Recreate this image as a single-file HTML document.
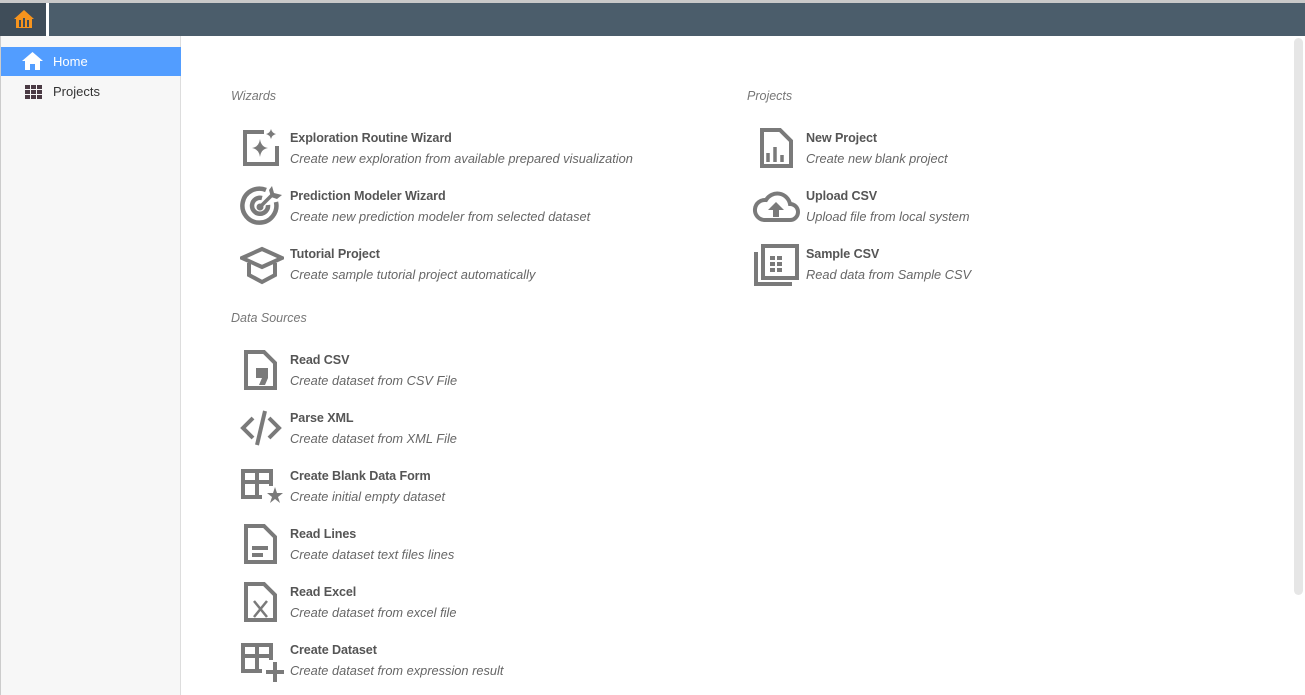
<!DOCTYPE html>
<html><head><meta charset="utf-8"><style>
*{margin:0;padding:0;box-sizing:border-box}
body{width:1305px;height:695px;overflow:hidden;background:#fff;font-family:"Liberation Sans",sans-serif;position:relative}
.top{position:absolute;left:0;top:0;width:1305px;height:36px;background:#4b5d6b;border-top:3px solid #c9c9c9}
.hb{position:absolute;left:0;top:0;width:49px;height:33px;background:#3f4d59;border-right:3px solid #fff}
.side{position:absolute;left:0;top:36px;width:181px;height:659px;background:#f7f7f7;border-right:1px solid #ddd;border-left:1px solid #ccc}
.nav{position:absolute;left:0;width:180px;height:29px;font-size:13px;line-height:29px;padding-left:52px;color:#333}
.nav.act{background:#529dff;color:#fff}
.sec{position:absolute;font-size:12.5px;font-style:italic;color:#777}
.it{position:absolute;height:50px}
.it svg{position:absolute;left:0;top:0}
.t{position:absolute;left:50px;top:3px;font-size:12.6px;font-weight:bold;color:#555;white-space:nowrap;letter-spacing:-0.1px}
.s{position:absolute;left:50px;top:23px;font-size:12.8px;font-style:italic;color:#666;white-space:nowrap}
.sb{position:absolute;left:1294px;top:38px;width:9px;height:557px;background:#e6e6e6;border-radius:5px}
</style></head><body>
<div class="top"><div class="hb">
<svg width="46" height="33" viewBox="0 0 46 33"><path d="M24 7 L14 16 H16 V25 H32 V16 H34 Z" fill="#f7941d"/><rect x="19" y="17" width="2" height="7" fill="#3f4d59"/><rect x="23" y="15" width="2" height="9" fill="#3f4d59"/><rect x="27" y="17" width="2" height="7" fill="#3f4d59"/></svg></div></div>
<div class="side">
<div class="nav act" style="top:11px"><svg style="position:absolute;left:21px;top:5px" width="21" height="18" viewBox="0 0 21 18"><path d="M10.5 0 L0 9 H3 V18 H8 V12 H13 V18 H18 V9 H21 Z" fill="#fff"/></svg>Home</div>
<div class="nav" style="top:41px"><svg style="position:absolute;left:24px;top:8px" width="17" height="14"><g fill="#4a3a44"><rect x="0" y="0" width="5" height="4"/><rect x="6" y="0" width="5" height="4"/><rect x="12" y="0" width="5" height="4"/><rect x="0" y="5" width="5" height="4"/><rect x="6" y="5" width="5" height="4"/><rect x="12" y="5" width="5" height="4"/><rect x="0" y="10" width="5" height="4"/><rect x="6" y="10" width="5" height="4"/><rect x="12" y="10" width="5" height="4"/></g></svg>Projects</div>
</div>
<div class="sb"></div>

<div class="sec" style="left:231px;top:89px">Wizards</div>
<div class="sec" style="left:747px;top:89px">Projects</div>
<div class="sec" style="left:231px;top:311px">Data Sources</div>

<div class="it" style="left:240px;top:128px"><svg width="44" height="44" viewBox="0 0 44 44" fill="none" stroke="#7a7a7a" stroke-width="4"><path d="M24 4 H5 V36 H37 V18"/><path d="M20 11 Q21 19 28 20 Q21 21 20 29 Q19 21 12 20 Q19 19 20 11Z" fill="#7a7a7a" stroke="none"/><path d="M31 1 Q32 5 36 6 Q32 7 31 11 Q30 7 26 6 Q30 5 31 1Z" fill="#7a7a7a" stroke="none"/></svg><div class="t">Exploration Routine Wizard</div><div class="s">Create new exploration from available prepared visualization</div></div>

<div class="it" style="left:240px;top:186px"><svg width="44" height="44" viewBox="0 0 44 44" fill="none" stroke="#7a7a7a" stroke-width="4.5"><path d="M36 16 A17 17 0 1 1 26 4"/><path d="M28 19 A8 8 0 1 1 22 12"/><circle cx="20" cy="21" r="3.5" fill="#7a7a7a" stroke="none"/><path d="M20 21 L32 9" stroke-width="3.5"/><path d="M29 4 L32 0 L34 7 L42 9 L37 13 L31 11Z" fill="#7a7a7a" stroke="none"/></svg><div class="t">Prediction Modeler Wizard</div><div class="s">Create new prediction modeler from selected dataset</div></div>

<div class="it" style="left:240px;top:244px"><svg width="44" height="44" viewBox="0 0 44 44" fill="none" stroke="#7a7a7a" stroke-width="4"><path d="M2 14 L22 5 L42 14 L22 23Z"/><path d="M9 19 V31 L22 38 L35 31 V19"/></svg><div class="t">Tutorial Project</div><div class="s">Create sample tutorial project automatically</div></div>

<div class="it" style="left:240px;top:350px"><svg width="44" height="44" viewBox="0 0 44 44" fill="none" stroke="#7a7a7a" stroke-width="4"><path d="M6 2 H24 L35 13 V38 H6Z"/><path d="M16 18 H28 V28 L25 35 H19 L22 28 H16Z" fill="#7a7a7a" stroke="none"/></svg><div class="t">Read CSV</div><div class="s">Create dataset from CSV File</div></div>

<div class="it" style="left:240px;top:408px"><svg width="44" height="44" viewBox="0 0 44 44" fill="none" stroke="#7a7a7a" stroke-width="4"><path d="M13 10 L3 20 L13 30"/><path d="M29 10 L39 20 L29 30"/><path d="M25 3 L17 37"/></svg><div class="t">Parse XML</div><div class="s">Create dataset from XML File</div></div>

<div class="it" style="left:240px;top:466px"><svg width="44" height="44" viewBox="0 0 44 44" fill="none" stroke="#7a7a7a" stroke-width="4"><path d="M31 20 V5 H3 V31 H22 M3 16 H31 M17 5 V31"/><path d="M35 21 L37 27 L43 27 L38 31 L40 37 L35 33 L30 37 L32 31 L27 27 L33 27Z" fill="#7a7a7a" stroke="none"/></svg><div class="t">Create Blank Data Form</div><div class="s">Create initial empty dataset</div></div>

<div class="it" style="left:240px;top:524px"><svg width="44" height="44" viewBox="0 0 44 44" fill="none" stroke="#7a7a7a" stroke-width="4"><path d="M6 2 H24 L35 13 V38 H6Z"/><path d="M12 24 H28 M12 31 H23"/></svg><div class="t">Read Lines</div><div class="s">Create dataset text files lines</div></div>

<div class="it" style="left:240px;top:582px"><svg width="44" height="44" viewBox="0 0 44 44" fill="none" stroke="#7a7a7a" stroke-width="4"><path d="M6 2 H24 L35 13 V38 H6Z"/><path d="M14 19 L27 35 M27 19 L14 35" stroke-width="2.5"/></svg><div class="t">Read Excel</div><div class="s">Create dataset from excel file</div></div>

<div class="it" style="left:240px;top:640px"><svg width="44" height="44" viewBox="0 0 44 44" fill="none" stroke="#7a7a7a" stroke-width="4"><path d="M31 20 V5 H3 V31 H22 M3 16 H31 M17 5 V31"/><path d="M35 22 V42 M26 32 H44"/></svg><div class="t">Create Dataset</div><div class="s">Create dataset from expression result</div></div>

<div class="it" style="left:756px;top:128px"><svg width="44" height="44" viewBox="0 0 44 44" fill="none" stroke="#7a7a7a" stroke-width="4"><path d="M6 2 H24 L35 13 V38 H6Z"/><path d="M12 25 V34 M19 19 V34 M26 27 V34" stroke-width="3.5"/></svg><div class="t">New Project</div><div class="s">Create new blank project</div></div>

<div class="it" style="left:752px;top:186px"><svg width="48" height="44" viewBox="0 0 48 44" fill="none" stroke="#7a7a7a" stroke-width="4"><path d="M12 34 H38 A8 8 0 0 0 38 18 A13 13 0 0 0 14 14 A10 10 0 0 0 12 34Z"/><path d="M24 16 L16 24 H21 V31 H27 V24 H32Z" fill="#7a7a7a" stroke="none"/></svg><div class="t" style="left:54px">Upload CSV</div><div class="s" style="left:54px">Upload file from local system</div></div>

<div class="it" style="left:752px;top:244px"><svg width="48" height="44" viewBox="0 0 48 44" fill="none" stroke="#7a7a7a" stroke-width="4"><path d="M11 2 H45 V34 H11Z"/><path d="M4 8 V40 H40"/><g fill="#7a7a7a" stroke="none"><rect x="18" y="12" width="5" height="4"/><rect x="25" y="12" width="5" height="4"/><rect x="18" y="18" width="5" height="4"/><rect x="25" y="18" width="5" height="4"/><rect x="18" y="24" width="5" height="4"/><rect x="25" y="24" width="5" height="4"/></g></svg><div class="t" style="left:54px">Sample CSV</div><div class="s" style="left:54px">Read data from Sample CSV</div></div>
</body></html>
